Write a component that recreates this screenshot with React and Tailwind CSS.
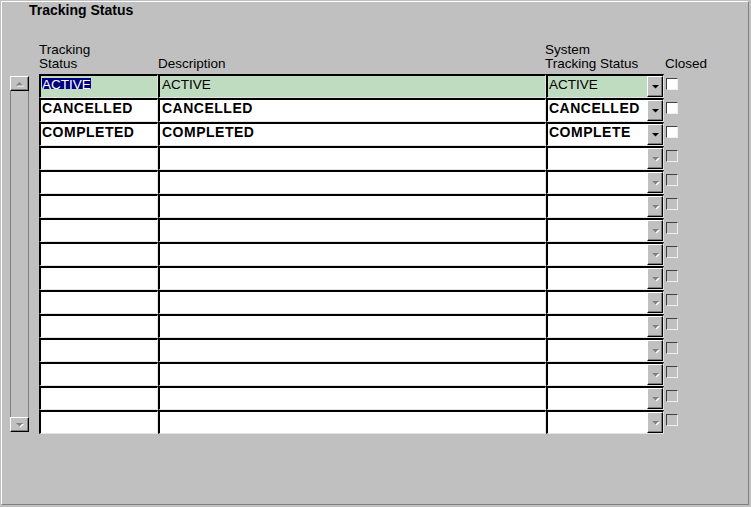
import React from 'react';

const ROWS = [
  { status: 'ACTIVE', desc: 'ACTIVE', sys: 'ACTIVE', active: true },
  { status: 'CANCELLED', desc: 'CANCELLED', sys: 'CANCELLED' },
  { status: 'COMPLETED', desc: 'COMPLETED', sys: 'COMPLETE' },
  ...Array.from({ length: 12 }, () => ({ status: '', desc: '', sys: '', empty: true })),
];

/* sunken text field, windows style */
function Field({ width, active, children, className = '' }) {
  return (
    <div
      className={`h-[24px] shrink-0 border-t-2 border-l-2 border-t-black border-l-black border-r border-b border-r-[#e4e4e4] border-b-[#e4e4e4] overflow-hidden ${
        active ? 'bg-[#c0dcc0]' : 'bg-white'
      } ${width} ${className}`}
    >
      {children}
    </div>
  );
}

function DownArrow({ disabled }) {
  if (disabled) {
    return (
      <svg width="9" height="6" viewBox="0 0 9 6">
        <path d="M2 2h7L5.5 5.5z" fill="#ffffff" />
        <path d="M1 1h7L4.5 4.5z" fill="#808080" />
      </svg>
    );
  }
  return (
    <svg width="9" height="6" viewBox="0 0 9 6">
      <path d="M1 1h7L4.5 4.5z" fill="#000000" />
    </svg>
  );
}

function DropButton({ disabled }) {
  return (
    <div className="w-[16px] h-[21px] shrink-0 bg-[#c0c0c0] border-t border-l border-t-white border-l-white border-r border-b border-r-black border-b-black shadow-[inset_-1px_-1px_0_#808080] flex items-center justify-center">
      <DownArrow disabled={disabled} />
    </div>
  );
}

function ScrollButton({ up, className = '' }) {
  return (
    <div
      className={`w-[19px] h-[15px] bg-[#c0c0c0] border-t border-l border-t-white border-l-white border-r border-b border-r-black border-b-black shadow-[inset_-1px_-1px_0_#808080] flex items-center justify-center ${className}`}
    >
      <svg width="9" height="6" viewBox="0 0 9 6">
        {up ? (
          <>
            <path d="M2 5.5h7L5.5 2z" fill="#ffffff" />
            <path d="M1 4.5h7L4.5 1z" fill="#808080" />
          </>
        ) : (
          <>
            <path d="M2 2h7L5.5 5.5z" fill="#ffffff" />
            <path d="M1 1h7L4.5 4.5z" fill="#808080" />
          </>
        )}
      </svg>
    </div>
  );
}

function Row({ r }) {
  const bold = !r.active && !r.empty;
  const txt = bold ? 'text-[14px] font-bold tracking-[0.5px]' : 'text-[13.5px] pt-px';
  return (
    <div className="flex h-[24px]">
      <Field width="w-[119px]" active={r.active} className="pl-px">
        {r.active ? (
          <span className="block w-fit mt-[2px] h-[11px] leading-[11px] bg-[#000080] text-white text-[13.5px] pt-px">
            {r.status}
          </span>
        ) : (
          <div className={`leading-[16px] text-black ${txt}`}>{r.status}</div>
        )}
      </Field>
      <Field width="w-[388px]" active={r.active} className="pl-[2px]">
        <div className={`leading-[16px] text-black ${txt}`}>{r.desc}</div>
      </Field>
      <Field width="w-[118px]" active={r.active} className="pl-px flex">
        <div className={`flex-1 leading-[16px] text-black ${txt}`}>{r.sys}</div>
        <DropButton disabled={r.empty} />
      </Field>
      <div
        className={`ml-[2px] mt-[4px] w-[12px] h-[12px] border-t border-l border-t-[#404040] border-l-[#404040] border-r border-b border-r-[#f0f0f0] border-b-[#f0f0f0] ${
          r.empty ? 'bg-[#c0c0c0]' : 'bg-white'
        }`}
      />
    </div>
  );
}

export default function App() {
  return (
    <div
      className="w-[751px] h-[507px] bg-[#c0c0c0] pt-px pl-px text-black"
      style={{ fontFamily: '"Liberation Sans", Arial, sans-serif' }}
    >
      <div className="w-[748px] h-[504px] border-t border-l border-t-white border-l-white border-r border-b border-r-[#808080] border-b-[#808080]">
        <div className="pl-[27px] h-[16px] leading-[16px] text-[14px] font-bold">Tracking Status</div>

        {/* column headings */}
        <div className="flex mt-[25px] h-[28px] text-[13.5px] leading-[14px] pl-[37px]">
          <div className="w-[119px]">
            <div>Tracking</div>
            <div>Status</div>
          </div>
          <div className="w-[387px] pt-[14px]">Description</div>
          <div className="w-[120px]">
            <div>System</div>
            <div>Tracking Status</div>
          </div>
          <div className="pt-[14px]">Closed</div>
        </div>

        <div className="flex mt-[3px] pl-[8px]">
          {/* scrollbar */}
          <div className="w-[19px] h-[358px] flex flex-col">
            <ScrollButton up className="mt-[2px]" />
            <div className="flex-1 border-l border-r border-l-[#808080] border-r-[#808080]" />
            <ScrollButton />
          </div>
          <div className="ml-[10px] flex flex-col">
            {ROWS.map((r, i) => (
              <Row key={i} r={r} />
            ))}
          </div>
        </div>
      </div>
    </div>
  );
}
